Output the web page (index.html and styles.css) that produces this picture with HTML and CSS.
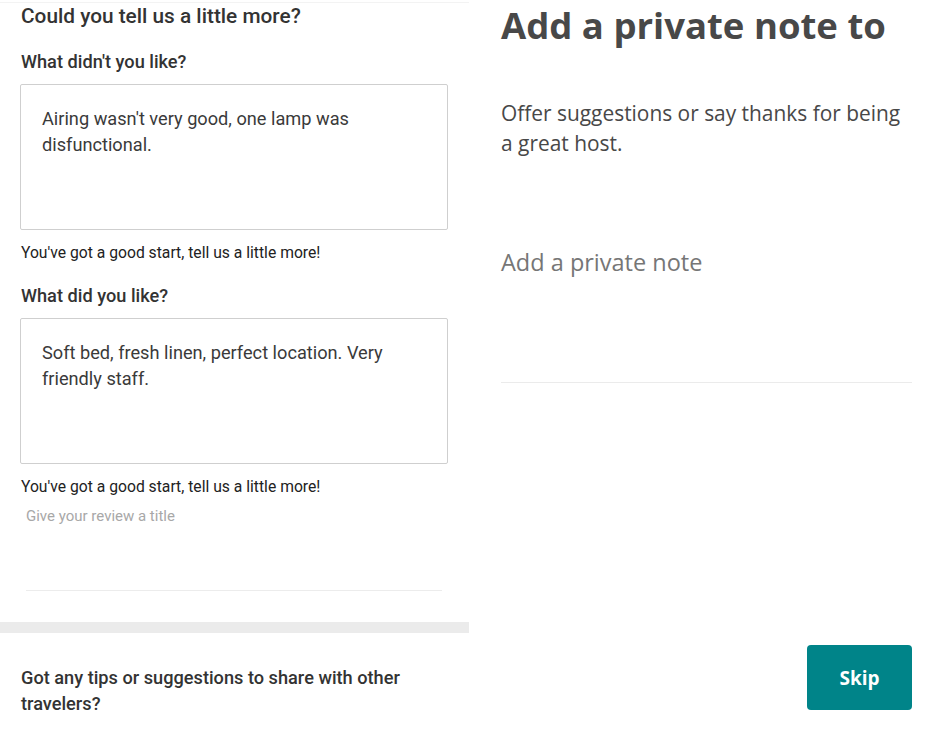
FILE: index.html
```html
<!DOCTYPE html>
<html>
<head>
<meta charset="utf-8">
<link rel="stylesheet" href="styles.css">
</head>
<body>
<div class="page">
  <section class="left">
    <h1 class="title">Could you tell us a little more?</h1>
    <h2 class="label first">What didn't you like?</h2>
    <div class="box">Airing wasn't very good, one lamp was disfunctional.</div>
    <p class="helper">You've got a good start, tell us a little more!</p>
    <h2 class="label second">What did you like?</h2>
    <div class="box">Soft bed, fresh linen, perfect location. Very friendly staff.</div>
    <p class="helper">You've got a good start, tell us a little more!</p>
    <div class="title-field">Give your review a title</div>
    <div class="divider"></div>
    <h2 class="tips">Got any tips or suggestions to share with other travelers?</h2>
  </section>
  <section class="right">
    <h1 class="note-title">Add a private note to</h1>
    <p class="note-desc">Offer suggestions or say thanks for being a great host.</p>
    <div class="note-field">Add a private note</div>
    <div class="actions"><button class="skip">Skip</button></div>
  </section>
</div>
</body>
</html>
```
FILE: styles.css
```css
* { box-sizing: border-box; }
html, body { margin: 0; padding: 0; background: #fff; }
.page {
  display: flex;
  width: 945px;
  height: 756px;
}
.left {
  width: 469px;
  margin-top: 2px;
  border-top: 1px solid #f3f3f3;
  font-family: Roboto, "Liberation Sans", sans-serif;
  color: #333;
}
.title {
  margin: 0;
  padding: 0 0 0 21px;
  font-size: 20.8px;
  font-weight: 500;
  line-height: 26px;
}
.label {
  margin: 0;
  padding-left: 21px;
  font-size: 18.2px;
  font-weight: 500;
  line-height: 24px;
}
.label.first { margin-top: 21px; }
.label.second { margin-top: 21px; }
.box {
  margin: 10px 0 0 20px;
  width: 428px;
  height: 146px;
  border: 1px solid #cfcfcf;
  border-radius: 2px;
  padding: 21px 30px 0 21px;
  font-size: 18.2px;
  line-height: 26px;
  color: #3a3a3a;
}
.helper {
  margin: 13px 0 0 21px;
  font-size: 15.7px;
  line-height: 20px;
  color: #222;
}
.title-field {
  margin: 9px 0 0 26px;
  font-size: 15px;
  line-height: 20px;
  color: #a8a8a8;
}
.divider {
  margin: 64px 0 0 26px;
  width: 416px;
  height: 1px;
  background: #ececec;
}
.tips {
  margin: 31px 0 0 0;
  padding: 32px 40px 0 21px;
  border-top: 11px solid #ebebeb;
  font-size: 18.2px;
  font-weight: 500;
  line-height: 26px;
}
.right {
  margin-left: 32px;
  width: 411px;
  display: flex;
  flex-direction: column;
  font-family: "Open Sans", "Liberation Sans", sans-serif;
  color: #484848;
}
.note-title {
  margin: 0;
  font-size: 36.5px;
  font-weight: 700;
  line-height: 50px;
  color: #484848;
}
.note-desc {
  margin: 48px 0 0 0;
  font-size: 20.9px;
  line-height: 30px;
}
.note-field {
  margin-top: 89px;
  padding-bottom: 105px;
  border-bottom: 1px solid #ebebeb;
  font-size: 23.5px;
  line-height: 30px;
  color: #767676;
}
.actions {
  margin-top: auto;
  margin-bottom: 46px;
  display: flex;
  justify-content: flex-end;
}
.skip {
  width: 105px;
  height: 65px;
  border: none;
  border-radius: 4px;
  background: #008489;
  color: #fff;
  font-family: "Open Sans", "Liberation Sans", sans-serif;
  font-size: 19px;
  font-weight: 700;
  cursor: pointer;
}
```
